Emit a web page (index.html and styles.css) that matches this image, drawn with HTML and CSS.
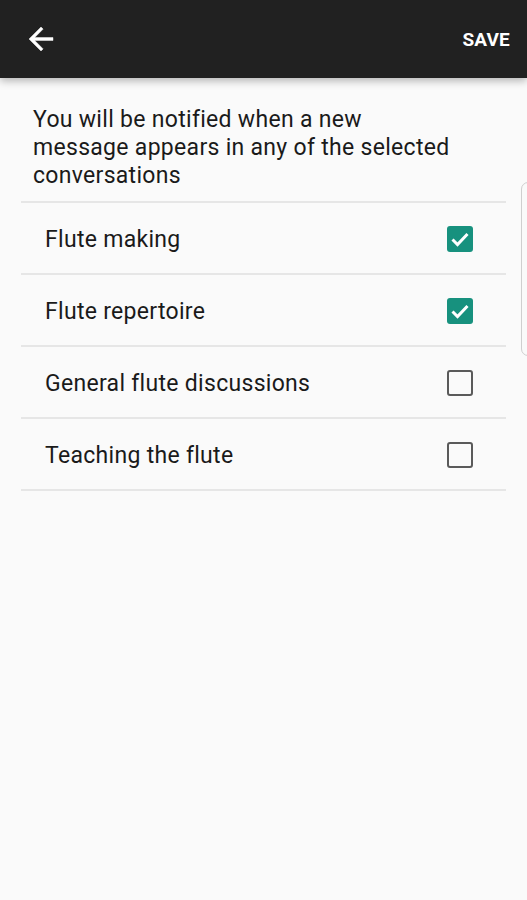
FILE: index.html
```html
<!DOCTYPE html>
<html lang="en">
  <head>
    <meta charset="UTF-8" />
    <title>Notifications</title>
    <meta name="viewport" content="width=device-width, initial-scale=1.0" />
    <link rel="stylesheet" href="styles.css">
  </head>
  <body>
    <div class="topbar">
      <button class="back" aria-label="Back">
        <svg width="36" height="36" viewBox="0 0 24 24">
          <path d="M20 11H7.83l5.59-5.59L12 4l-8 8 8 8 1.41-1.41L7.83 13H20v-2z" fill="#fff" stroke="#fff" stroke-width="0.3"/>
        </svg>
      </button>
      <button class="save">SAVE</button>
    </div>

    <div class="content">
      <p class="intro">You will be notified when a new<br>message appears in any of the selected<br>conversations</p>

      <ul class="convos">
        <li>
          <span>Flute making</span>
          <span class="check on">
            <svg width="26" height="26" viewBox="0 0 26 26"><path d="M5.5 13.5l5 5 10-10.5" fill="none" stroke="#fff" stroke-width="3"/></svg>
          </span>
        </li>
        <li>
          <span>Flute repertoire</span>
          <span class="check on">
            <svg width="26" height="26" viewBox="0 0 26 26"><path d="M5.5 13.5l5 5 10-10.5" fill="none" stroke="#fff" stroke-width="3"/></svg>
          </span>
        </li>
        <li>
          <span>General flute discussions</span>
          <span class="check"></span>
        </li>
        <li>
          <span>Teaching the flute</span>
          <span class="check"></span>
        </li>
      </ul>
    </div>

    <div class="edge-handle"></div>
  </body>
</html>
```

FILE: styles.css
```css
body {
  font-family: Roboto, "Noto Sans", Arial, sans-serif;
  background-color: #fafafa;
  margin: 0;
  color: #1a1a1a;
}

.topbar {
  height: 78px;
  background: #212121;
  display: flex;
  align-items: center;
  justify-content: space-between;
  padding: 0 17px 0 23px;
  box-shadow: 0 3px 8px rgba(0, 0, 0, 0.28);
  position: relative;
}

.topbar button {
  background: none;
  border: none;
  padding: 0;
  cursor: pointer;
  color: white;
}

.back {
  display: flex;
}

.save {
  font-family: Roboto, Arial, sans-serif;
  font-size: 19px;
  font-weight: bold;
  letter-spacing: 0.2px;
}

.content {
  padding: 0 21px;
}

.intro {
  margin: 0;
  padding: 28px 12px 11px 12px;
  font-size: 23px;
  line-height: 28px;
  letter-spacing: 0.3px;
}

.convos {
  list-style: none;
  padding: 0;
  margin: 0;
  border-top: 2px solid #e6e6e6;
}

.convos li {
  box-sizing: border-box;
  height: 72px;
  display: flex;
  align-items: center;
  justify-content: space-between;
  padding: 2px 33px 0 24px;
  font-size: 23px;
  letter-spacing: 0.3px;
  border-bottom: 2px solid #e6e6e6;
}

.check {
  width: 22px;
  height: 22px;
  border: 2px solid #5a5a5a;
  border-radius: 3px;
}

.check.on {
  width: 26px;
  height: 26px;
  border: none;
  background: #17917e;
  display: flex;
}

.edge-handle {
  position: absolute;
  top: 182px;
  left: 521px;
  width: 20px;
  height: 172px;
  border: 1px solid #cfcfcf;
  border-radius: 7px;
}
```
